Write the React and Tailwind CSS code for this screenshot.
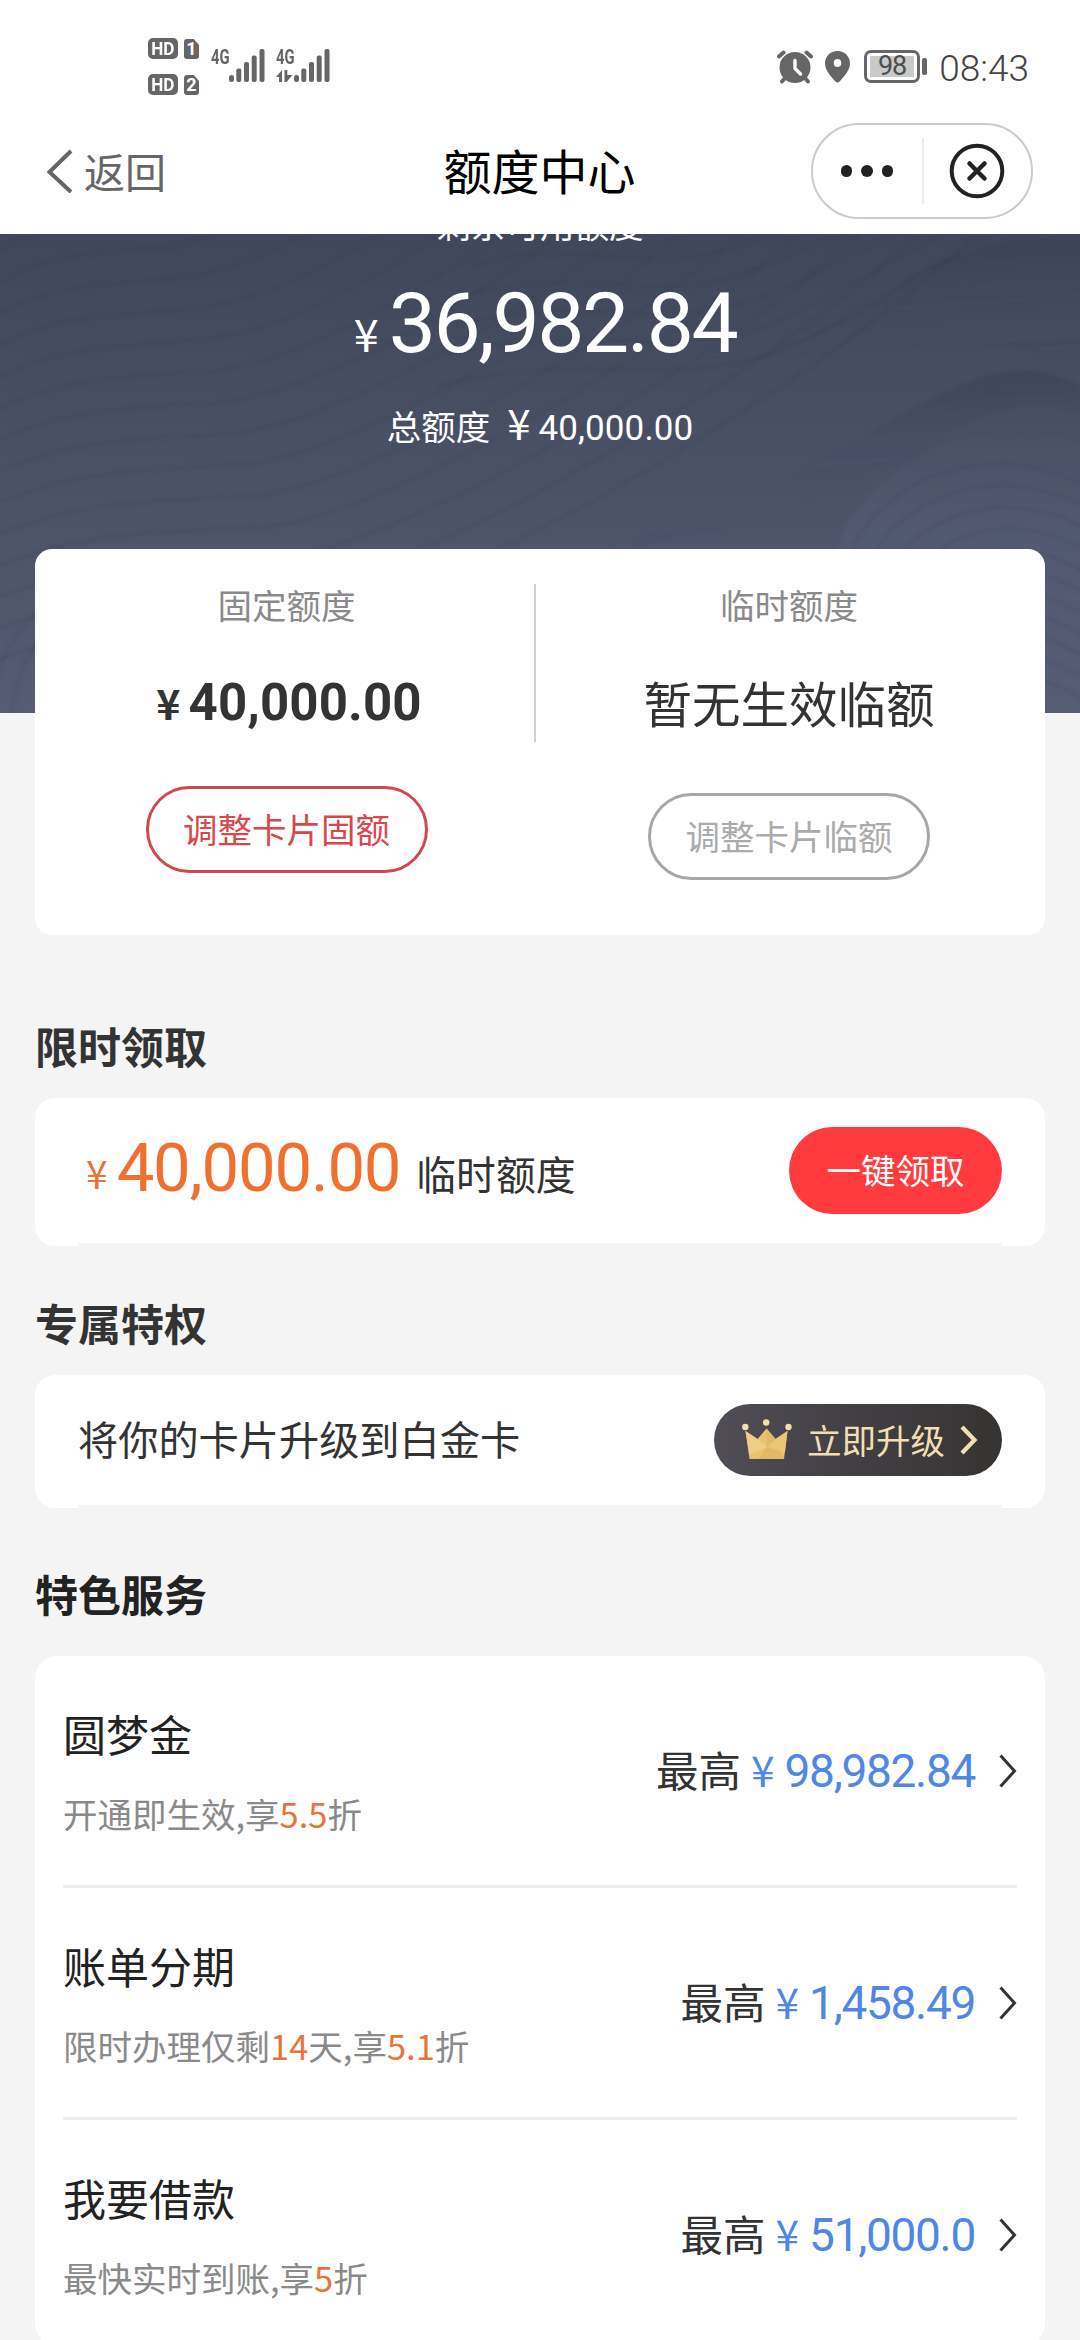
import React from "react";

const services = [
  {
    name: "圆梦金",
    note: [["开通即生效,享"], ["5.5", true], ["折"]],
    amount: "98,982.84",
  },
  {
    name: "账单分期",
    note: [["限时办理仅剩"], ["14", true], ["天,享"], ["5.1", true], ["折"]],
    amount: "1,458.49",
  },
  {
    name: "我要借款",
    note: [["最快实时到账,享"], ["5", true], ["折"]],
    amount: "51,000.0",
  },
];

const leftWaves = Array.from({ length: 15 }, (_, i) => {
  const y = -20 + i * 31;
  const e = 130 + i * 58;
  return `M-20 ${y + 18} C ${30 + i * 4} ${y - 22}, ${70 + i * 6} ${y - 22}, ${130 + i * 12} ${y - 28} S ${e - 30} ${Math.min(y - 60, 10 + i * 6)}, ${e + 60} -30`;
});

const topWaves = [0, 1, 2, 3, 4].map(
  (i) => `M${470 - i * 8} ${32 + i * 30} C 560 ${4 + i * 29}, 640 ${34 + i * 28}, ${700 + i * 8} ${22 + i * 27} S ${790 + i * 30} ${-10 + i * 12}, ${850 + i * 45} -20`
);

const blobWaves = Array.from({ length: 11 }, (_, i) => {
  const t = i * 22;
  return `M${842 + i * 12} ${350 + t} C ${850 + i * 12} ${262 + t}, ${980 + i * 3} ${185 + t * 0.97}, 1100 ${260 + t}`;
});

function HeroPattern() {
  return (
    <svg className="absolute inset-0 h-full w-full" viewBox="0 0 1080 479" preserveAspectRatio="none" fill="none">
      <defs>
        <linearGradient id="bandA" x1="0.3" y1="0" x2="0.5" y2="1">
          <stop offset="0" stopColor="#353a50" stopOpacity="0.55" />
          <stop offset="0.45" stopColor="#3a4056" stopOpacity="0.12" />
          <stop offset="1" stopColor="#3a4056" stopOpacity="0" />
        </linearGradient>
        <linearGradient id="blob" x1="0" y1="0" x2="0" y2="1">
          <stop offset="0" stopColor="#5c6482" stopOpacity="0" />
          <stop offset="0.4" stopColor="#5c6482" stopOpacity="0.3" />
          <stop offset="1" stopColor="#5c6482" stopOpacity="0.1" />
        </linearGradient>
        <filter id="soft" x="-5%" y="-5%" width="110%" height="110%">
          <feGaussianBlur stdDeviation="1.6" />
        </filter>
      </defs>
      <g filter="url(#soft)">
        <path d="M1090 8 C 1000 -8, 930 28, 860 70 S 760 108, 700 122 C 800 130, 1000 80, 1090 140 Z" fill="url(#bandA)" />
        <path d="M1090 158 C 1040 122, 990 134, 920 170 S 760 268, 600 315 C 760 300, 860 250, 940 205 S 1060 165, 1090 190 Z" fill="url(#bandA)" />
        <path d="M838 320 C 842 262, 940 195, 1010 195 S 1070 210, 1090 218 V 479 H 1040 V 320 Z" fill="url(#blob)" />
        <g stroke="#33394d" strokeOpacity="0.24" strokeWidth="3">
          {leftWaves.map((d, i) => <path key={i} d={d} />)}
          {topWaves.map((d, i) => <path key={i} d={d} />)}
        </g>
        <g stroke="#3a4058" strokeOpacity="0.2" strokeWidth="3.5">
          {blobWaves.map((d, i) => <path key={i} d={d} />)}
          <path d="M-4 448 C 6 410, 20 390, 50 368" />
          <path d="M12 479 C 16 440, 26 420, 44 402" />
        </g>
      </g>
    </svg>
  );
}

function SimBadge({ n }) {
  return (
    <div className="flex h-[21px] gap-[6px] text-white">
      <div className="flex h-[21px] w-[30px] items-center justify-center rounded-[5px] bg-[#666]">
        <span className="scale-x-[0.9] font-['Roboto',sans-serif] text-[19px] font-bold leading-none">HD</span>
      </div>
      <div className="mt-[1px] flex h-[20px] w-[15px] items-center justify-center rounded-[3px] bg-[#666] font-['Roboto',sans-serif] text-[18px] font-bold leading-none [clip-path:polygon(0_0,65%_0,100%_30%,100%_100%,0_100%)]">{n}</div>
    </div>
  );
}

function Signal({ data }) {
  return (
    <div className="relative h-[36px] w-[54px]">
      <span className="block origin-left scale-x-[0.74] font-['Roboto',sans-serif] text-[20px] font-bold leading-[20px] text-[#666]">4G</span>
      <svg className="absolute inset-0" width="54" height="36" viewBox="0 0 54 36" fill="#666">
        <rect x="18" y="28" width="5" height="7" rx="2.5" />
        <rect x="25.3" y="21.5" width="5" height="13.5" rx="2" />
        <rect x="33" y="15" width="5" height="20" rx="2" />
        <rect x="40.7" y="8.5" width="5" height="26.5" rx="2" />
        <rect x="48.5" y="2" width="5" height="33" rx="2" />
        {data && <path d="M0 30 L6 23 V35 H3 V30 Z" />}
        {data && <path d="M8.500 23 H11.300 V28 H16.500 L10.500 35 H8.500 Z" />}
      </svg>
    </div>
  );
}

function StatusBar() {
  return (
    <div className="flex h-[110px] justify-between pl-[148px] pr-[51px]">
      <div className="flex">
        <div className="flex flex-col gap-[15px] pt-[38px]">
          <SimBadge n="1" />
          <SimBadge n="2" />
        </div>
        <div className="ml-[12px] flex gap-[11px] pt-[47px]">
          <Signal />
          <Signal data />
        </div>
      </div>
      <div className="flex pt-[50px]">
        <svg width="36" height="34" viewBox="0 0 36 34">
          <circle cx="18" cy="17.5" r="15.5" fill="#666" />
          <path d="M2 6.5 L6.5 2.5 M34 6.5 L29.5 2.5 M5 31.5 L8 28 M31 31.5 L28 28" stroke="#666" strokeWidth="4" strokeLinecap="round" />
          <path d="M18 10.5 V18.5 L23.5 24" fill="none" stroke="#fff" strokeWidth="3.4" strokeLinecap="round" strokeLinejoin="round" />
        </svg>
        <svg className="ml-[12px] mt-[1px]" width="25" height="32" viewBox="0 0 25 32">
          <path fillRule="evenodd" fill="#666" d="M12.5 0 C5.4 0 0 5.4 0 12.4 C0 19 6 25.500 10.500 30.500 Q12.500 32.500 14.500 30.500 C19 25.500 25 19 25 12.400 C25 5.400 19.600 0 12.500 0 Z M12.500 8 A3.700 3.900 0 1 1 12.500 15.900 A3.700 3.900 0 1 1 12.500 8 Z" />
        </svg>
        <div className="ml-[14px] h-[33px] w-[56px] rounded-[7px] border-[3px] border-[#666] p-[3px]">
          <div className="flex h-full w-[44px] items-center justify-center bg-[#c9c9c9] font-['Roboto',sans-serif] text-[27px] leading-none tracking-[-1px] text-[#4d4d4d]">98</div>
        </div>
        <div className="ml-[2px] mt-[8px] h-[17px] w-[5px] rounded-[2px] bg-[#666]" />
        <div className="ml-[12px] mt-[-1px] whitespace-nowrap font-['Roboto',sans-serif] text-[37px] font-light leading-[40px] text-[#444]">08:43</div>
      </div>
    </div>
  );
}

function NavBar() {
  return (
    <div className="grid h-[124px] grid-cols-[1fr_auto_1fr] pl-[46px] pr-[47px]">
      <div className="mt-[38px] flex h-[46px] items-center text-[#666]">
        <svg width="27" height="44" viewBox="0 0 27 44" fill="none" stroke="#666" strokeWidth="4">
          <path d="M25 2 L3.500 23 L25 43" />
        </svg>
        <span className="ml-[11px] mt-[-3px] text-[41px] leading-[46px]">返回</span>
      </div>
      <div className="mt-[30px] text-[48px] leading-[58px] text-black">额度中心</div>
      <div className="mt-[13px] flex h-[96px] w-[222px] items-center justify-self-end rounded-full border-2 border-[#cbcbcb]">
        <div className="flex w-[109px] justify-center gap-[9px] pr-[1px]">
          <i className="h-[11.500px] w-[11.500px] rounded-full bg-[#222]" />
          <i className="h-[11.500px] w-[11.500px] rounded-full bg-[#222]" />
          <i className="h-[11.500px] w-[11.500px] rounded-full bg-[#222]" />
        </div>
        <div className="h-[66px] w-[2px] bg-[#ececec]" />
        <svg className="ml-[25px]" width="56" height="56" viewBox="0 0 56 56" fill="none" stroke="#222" strokeWidth="4">
          <circle cx="28" cy="28" r="25.300" />
          <path d="M20.500 20.500 L35.500 35.500 M35.500 20.500 L20.500 35.500" strokeWidth="4.500" strokeLinecap="round" />
        </svg>
      </div>
    </div>
  );
}

function Crown() {
  return (
    <svg width="50" height="42" viewBox="0 0 50 42">
      <path d="M3.500 12 L15.500 20 L24.500 9.500 L33.500 20 L45.500 12 L42 40 H7.500 Z" fill="#e9c270" />
      <path d="M24.500 9.500 L33.500 20 L42 40 H16 L25 28 Z" fill="#e3b968" />
      <path d="M3.500 12 L15.500 20 L25 28 L7.500 36 Z" fill="#efcd84" />
      <path d="M45.500 12 L33.500 20 L25 28 L43 33 Z" fill="#ecc677" />
      <circle cx="3.300" cy="8" r="3.200" fill="#f5dfa9" />
      <circle cx="24.200" cy="3.500" r="3.200" fill="#f5dfa9" />
      <circle cx="46.500" cy="8" r="3.200" fill="#f5dfa9" />
    </svg>
  );
}

function Notched({ className, children }) {
  return (
    <div className={"mx-[35px] flex flex-col overflow-hidden rounded-[20px] bg-white " + className}>
      {children}
      <div className="mx-[43px] h-[3px] bg-[#f4f4f4]" />
    </div>
  );
}

export default function App() {
  return (
    <div className="h-[2340px] w-[1080px] overflow-hidden bg-[#f4f4f4] font-['Noto_Sans_CJK_SC',sans-serif] text-[#333]">
      <header className="bg-white">
        <StatusBar />
        <NavBar />
      </header>

      <section className="relative h-[479px] overflow-hidden bg-linear-to-b from-[#40475a] to-[#555c73] text-white">
        <HeroPattern />
        <div className="relative flex flex-col items-center">
          <div className="mt-[-37px] text-[34.500px] leading-[52px]">剩余可用额度</div>
          <div className="mt-[25px] flex h-[100px] items-baseline pl-[10px] leading-[100px]">
            <span className="text-[45px]">¥</span>
            <span className="ml-[10px] font-['Roboto',sans-serif] text-[84px] tracking-[-2.400px]">36,982.84</span>
          </div>
          <div className="mt-[23px] flex h-[50px] items-baseline leading-[50px]">
            <span className="text-[34.500px]">总额度</span>
            <span className="ml-[17px] text-[42px]">¥</span>
            <span className="ml-[8px] font-['Roboto',sans-serif] text-[35px] tracking-[0.100px]">40,000.00</span>
          </div>
        </div>
      </section>

      <section className="relative mx-[35px] mt-[-164px] flex h-[386px] rounded-[17px] bg-white">
        <div className="flex w-[499px] flex-col items-center pl-[4px]">
          <div className="mt-[30px] h-[50px] text-[34.500px] leading-[50px] text-[#8a8a8a]">固定额度</div>
          <div className="mt-[43px] flex h-[60px] items-baseline pl-[5px] font-bold leading-[60px]">
            <span className="text-[41px]">¥</span>
            <span className="ml-[8px] font-['Roboto',sans-serif] text-[51px] tracking-[0.100px]">40,000.00</span>
          </div>
          <div className="mt-[54px] flex h-[87px] w-[282px] items-center justify-center rounded-full border-[3px] border-[#cf4a4e] pb-[3px] text-[34.500px] leading-none text-[#d9474b]">调整卡片固额</div>
        </div>
        <div className="mt-[35px] h-[158px] w-[2px] bg-[#d0d0d0]" />
        <div className="flex flex-1 flex-col items-center pr-[3px]">
          <div className="mt-[30px] h-[50px] text-[34.500px] leading-[50px] text-[#8a8a8a]">临时额度</div>
          <div className="mt-[43px] h-[60px] text-[48.500px] leading-[60px]">暂无生效临额</div>
          <div className="mt-[61px] flex h-[87px] w-[282px] items-center justify-center rounded-full border-[3px] border-[#a7a7a7] pb-[3px] text-[34.500px] leading-none text-[#ababab]">调整卡片临额</div>
        </div>
      </section>

      <h2 className="ml-[35px] mt-[80px] h-[60px] text-[43px] font-bold leading-[60px]">限时领取</h2>
      <Notched className="mt-[23px] h-[148px]">
        <div className="flex h-[145px] items-center pl-[51px] pr-[43px]">
          <div className="flex flex-1 items-baseline leading-[100px]">
            <span className="relative top-[-2px] text-[39px] text-[#e8743b]">¥</span>
            <span className="ml-[9px] font-['Roboto',sans-serif] text-[67px] tracking-[-1.200px] text-[#f0712f]">40,000.00</span>
            <span className="relative top-[-1px] ml-[16px] text-[39.800px]">临时额度</span>
          </div>
          <div className="flex h-[87px] w-[213px] items-center justify-center rounded-full bg-[#ff3b3e] pb-[3px] text-[34.500px] leading-none text-white">一键领取</div>
        </div>
      </Notched>

      <h2 className="ml-[35px] mt-[46px] h-[60px] text-[43px] font-bold leading-[60px]">专属特权</h2>
      <Notched className="mt-[23px] h-[133px]">
        <div className="flex h-[130px] items-center justify-between pl-[43px] pr-[43px]">
          <div className="pb-[4px] text-[40.200px] leading-[60px]">将你的卡片升级到白金卡</div>
          <div className="flex h-[72px] w-[288px] items-center rounded-full bg-linear-to-r from-[#504d57] via-[#413f43] to-[#363432] pl-[28px] text-[#f3deb4]">
            <Crown />
            <span className="ml-[15px] pb-[3px] text-[34.500px] leading-[50px]">立即升级</span>
            <svg className="ml-[14px]" width="20" height="30" viewBox="0 0 20 30" fill="none" stroke="#f3deb4" strokeWidth="4.200">
              <path d="M3 2 L15.500 15 L3 28" />
            </svg>
          </div>
        </div>
      </Notched>

      <h2 className="ml-[35px] mt-[55px] h-[60px] text-[43px] font-bold leading-[60px] text-[#222]">特色服务</h2>
      <div className="mx-[35px] mt-[33px] h-[690px] rounded-[22px] bg-white px-[28px]">
        {services.map((s) => (
          <div key={s.name} className="flex h-[232px] items-center justify-between border-b-[3px] border-[#ededed] last:border-transparent">
            <div>
              <div className="text-[43px] leading-[60px] text-[#222]">{s.name}</div>
              <div className="mt-[25px] text-[34.500px] leading-[50px] text-[#8a8a8a]">
                {s.note.map(([t, hot], i) => (
                  <span key={i} className={hot ? "text-[#e8743b]" : ""}>{t}</span>
                ))}
              </div>
            </div>
            <div className="flex items-center">
              <div className="flex items-baseline pb-[2px] leading-[60px]">
                <span className="text-[42.500px]">最高</span>
                <span className="ml-[10px] text-[42.500px] text-[#5087e5]">¥</span>
                <span className="ml-[10px] font-['Roboto',sans-serif] text-[46px] tracking-[-1.300px] text-[#5087e5]">{s.amount}</span>
              </div>
              <svg className="ml-[24px]" width="18" height="34" viewBox="0 0 18 34" fill="none" stroke="#333" strokeWidth="3">
                <path d="M1.500 1.500 L15.500 17 L1.500 32.500" />
              </svg>
            </div>
          </div>
        ))}
      </div>
    </div>
  );
}
